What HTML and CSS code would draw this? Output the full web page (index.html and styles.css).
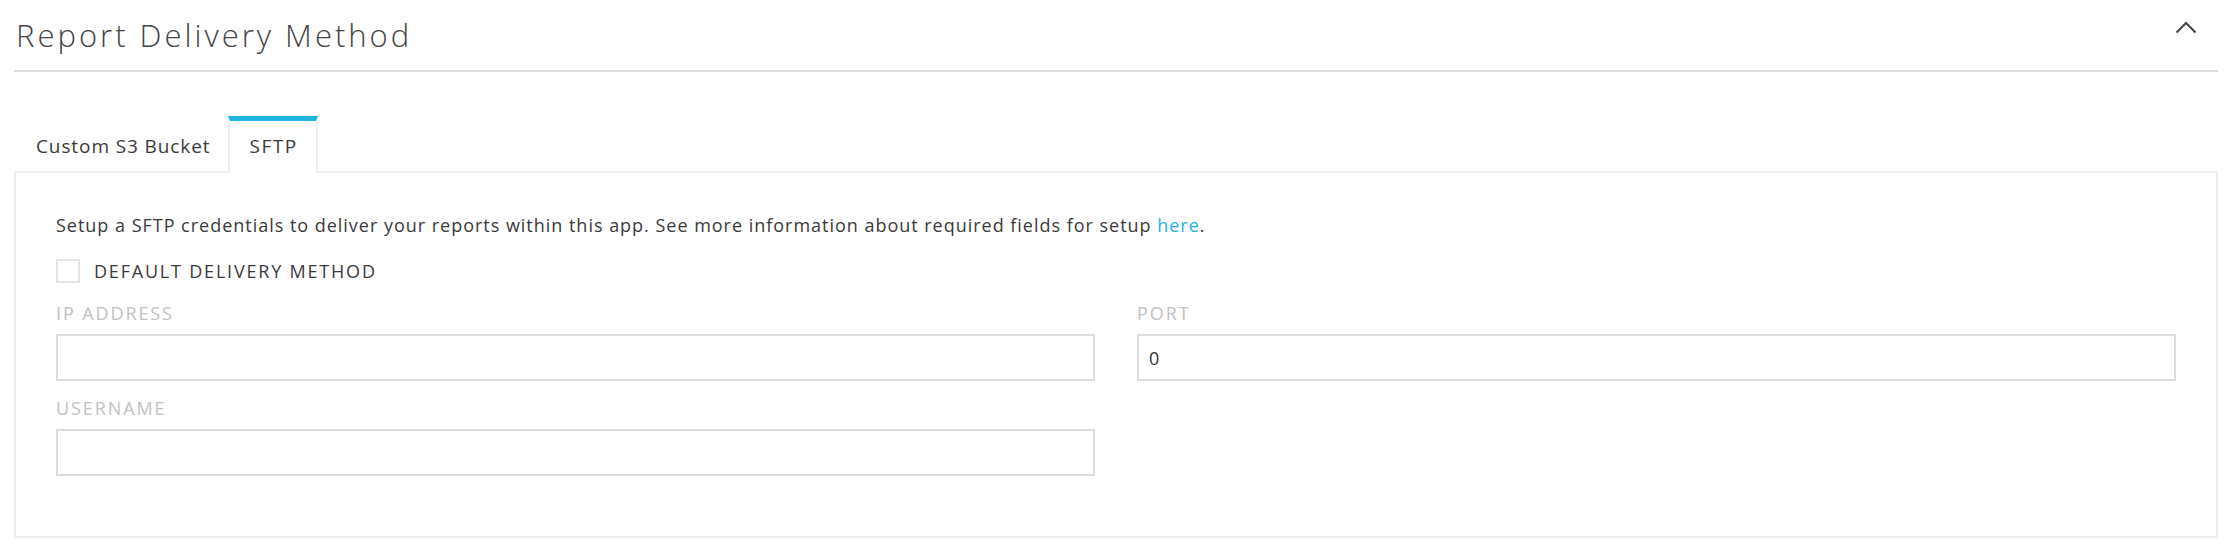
FILE: index.html
```html
<html>
<head>
    <title>Report Delivery Method</title>
    <link rel="stylesheet" href="styles.css">
</head>
<body>
<main class="container">
    <section class="delivery">
        <header class="delivery-header">
            <h2 class="delivery-title">Report Delivery Method</h2>
            <button class="collapse-btn" type="button">
                <svg width="22" height="13" viewBox="0 0 22 13">
                    <polyline points="1.5,11.5 11,2 20.5,11.5" fill="none" stroke="#444" stroke-width="2"/>
                </svg>
            </button>
        </header>
        <ul class="tab-list">
            <li class="tab">Custom S3 Bucket</li>
            <li class="tab tab-active">SFTP</li>
        </ul>
        <div class="tab-panel">
            <p class="panel-text">Setup a SFTP credentials to deliver your reports within this app. See more information about required fields for setup <a href="#" class="panel-link">here</a>.</p>
            <label class="checkbox-row">
                <span class="checkbox"></span>
                DEFAULT DELIVERY METHOD
            </label>
            <div class="form-grid">
                <div class="field">
                    <label class="field-label">IP ADDRESS</label>
                    <input type="text" class="field-input">
                </div>
                <div class="field">
                    <label class="field-label">PORT</label>
                    <input type="text" class="field-input" value="0">
                </div>
                <div class="field">
                    <label class="field-label">USERNAME</label>
                    <input type="text" class="field-input">
                </div>
            </div>
        </div>
    </section>
</main>
</body>
</html>
```

FILE: styles.css
```css
body {
    margin: 0;
    background: #fff;
    color: #3a3a3a;
    font-family: "Open Sans", Lato, sans-serif;
}

.container {
    margin: 0 16px 0 14px;
}

.delivery-header {
    height: 70px;
    display: flex;
    align-items: center;
    justify-content: space-between;
    border-bottom: 2px solid #dedede;
}

.delivery-title {
    margin: 0;
    padding-left: 2px;
    font-size: 31px;
    font-weight: 300;
    letter-spacing: 3px;
    color: #444;
}

.collapse-btn {
    margin-right: 21px;
    margin-bottom: 16px;
    padding: 0;
    border: 0;
    background: none;
    display: block;
}

.collapse-btn svg {
    display: block;
}

.tab-list {
    margin: 44px 0 0;
    padding: 0;
    list-style: none;
    display: flex;
}

.tab {
    height: 50px;
    padding: 0 18px 0 22px;
    line-height: 50px;
    font-size: 19px;
    letter-spacing: 0.9px;
    color: #3a3a3a;
    border-top: 5px solid transparent;
}

.tab-active {
    margin-bottom: -2px;
    padding: 0 18px 0 19px;
    height: 52px;
    background: #fff;
    letter-spacing: 1.5px;
    border-top-color: #1fb4e2;
    border-left: 2px solid #eeeeee;
    border-right: 2px solid #eeeeee;
    position: relative;
}

.tab-panel {
    padding: 40px 40px 60px;
    border: 2px solid #eeeeee;
}

.panel-text {
    margin: 0;
    font-size: 18px;
    line-height: 24px;
    letter-spacing: 0.98px;
}

.panel-link {
    color: #1fb4e2;
    text-decoration: none;
}

.checkbox-row {
    margin-top: 22px;
    display: flex;
    align-items: center;
    gap: 14px;
    font-size: 18px;
    line-height: 24px;
    letter-spacing: 1.8px;
}

.checkbox {
    width: 20px;
    height: 20px;
    border: 2px solid #e6e6e6;
}

.form-grid {
    margin-top: 18px;
    display: grid;
    grid-template-columns: 1fr 1fr;
    column-gap: 42px;
    row-gap: 15px;
}

.field-label {
    display: block;
    margin-bottom: 9px;
    font-size: 18px;
    line-height: 24px;
    letter-spacing: 1.9px;
    color: #c2c2c2;
}

.field-input {
    width: 100%;
    height: 47px;
    box-sizing: border-box;
    padding: 0 10px;
    border: 2px solid #dddddd;
    font-family: "Open Sans", Lato, sans-serif;
    font-size: 18px;
    color: #333;
    outline: none;
}
```
